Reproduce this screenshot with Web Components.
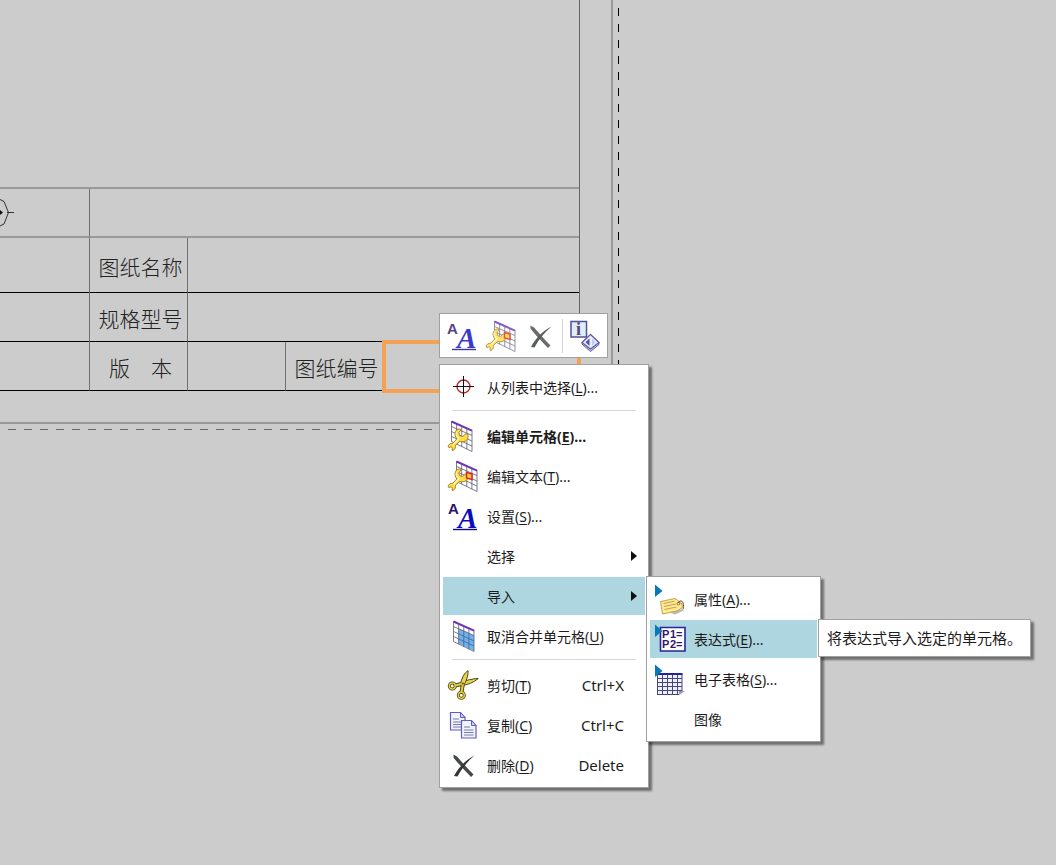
<!DOCTYPE html>
<html lang="zh-CN">
<head>
<meta charset="utf-8">
<title>图纸</title>
<style>
  body { margin: 0; background: #ccc; color: #1c1c1c; font: 14px/20px "Noto Sans", "Noto Sans CJK SC", sans-serif; }
  cad-app { min-height: 100vh; }
</style>
</head>
<body>
<cad-app>
  <drawing-sheet></drawing-sheet>
  <popup-group slot="popup">
    <tool-bar>
      <tool-button icon="settings" label="设置"></tool-button>
      <tool-button icon="edit-text" label="编辑文本"></tool-button>
      <tool-button icon="delete" label="删除"></tool-button>
      <tool-divider></tool-divider>
      <tool-button icon="info" label="信息"></tool-button>
    </tool-bar>
    <context-menu>
      <menu-item icon="target">从列表中选择(<u>L</u>)...</menu-item>
      <menu-divider></menu-divider>
      <menu-item icon="edit-cell" default>编辑单元格(<u>E</u>)...</menu-item>
      <menu-item icon="edit-text">编辑文本(<u>T</u>)...</menu-item>
      <menu-item icon="settings">设置(<u>S</u>)...</menu-item>
      <menu-item more>选择</menu-item>
      <menu-item more active>导入
        <context-menu slot="over">
          <menu-item icon="attributes">属性(<u>A</u>)...</menu-item>
          <menu-item icon="expression" active>表达式(<u>E</u>)...
            <tool-tip slot="over">将表达式导入选定的单元格。</tool-tip>
          </menu-item>
          <menu-item icon="spreadsheet">电子表格(<u>S</u>)...</menu-item>
          <menu-item>图像</menu-item>
        </context-menu>
      </menu-item>
      <menu-item icon="unmerge">取消合并单元格(<u>U</u>)</menu-item>
      <menu-divider></menu-divider>
      <menu-item icon="cut" keys="Ctrl+X">剪切(<u>T</u>)</menu-item>
      <menu-item icon="copy" keys="Ctrl+C">复制(<u>C</u>)</menu-item>
      <menu-item icon="delete" keys="Delete">删除(<u>D</u>)</menu-item>
    </context-menu>
  </popup-group>
</cad-app>

<script>
const define = (name, html, setup) => {
  const template = document.createElement('template');
  template.innerHTML = html;
  customElements.define(name, class extends HTMLElement {
    constructor() {
      super();
      this.attachShadow({ mode: 'open' }).append(template.content.cloneNode(true));
    }
    connectedCallback() { if (setup) setup(this, this.shadowRoot); }
  });
};

/* Slanted grid whose top left corner is at x, 1 */
const grid = (x, w, filled) => {
  const s = w / 4, d = 9 / 4;
  let out = `<path d="M${x} 1l${w} 9v21l${-w} -9.5z" fill="#fff"/>`;
  if (filled) out += `<path d="M${x + s} 8.5L${x + w} 15.500V31L${x + s} 23.500z" fill="#69b4f4"/>`;
  out += `<path d="M${x} 1v20.500l${w} 10V10M${x + s} ${1 + d}v21M${x + 2 * s} ${1 + 2 * d}v21.500M${x + 3 * s} ${1 + 3 * d}v21.500M${x} 6.500l${w} 9M${x} 11.500l${w} 9.500M${x} 16.500l${w} 9.500" fill="none" stroke="#5c5c74" stroke-width=".8"/>`;
  return out + `<path d="M${x} 1.500l${w} 9.200" stroke="#6d35b5" stroke-width="2"/>`;
};
const wrench = `<path d="M8.500 11.500c1-2 3.200-2.700 5-2.500l.5 1-2 2.500.5 3 3 1 3.300-2.800 1.800.3c1.400 3-.1 6.800-3.600 7.600-1.700.4-3.100 0-4.200-.2l-4.300 3.800c.3 2-.5 4.300-2.500 5.300l-1-.3.4-2.400-1.400-1-2 .7-.9-.6c.2-2.300 2.100-4 4.800-3.700l4-4.400c-1.800-1.800-2.400-4.700-1.400-7.300z" fill="#ffdb45" stroke="#9c7a1e" stroke-width=".9"/><path d="M9.500 12.500c-.5 2 .2 4.500 2.300 6.200L6.500 24.500" fill="none" stroke="#fff6b5" stroke-width="1.300"/>`;
const pointer = '<path d="M1 1.500L8.500 8L1 14z" fill="#0a78b4"/>';

const ICONS = {
  target: '<circle cx="16.500" cy="15.500" r="6.500" fill="none" stroke="#c8202c" stroke-width="1.400"/><path d="M6 15.500h21M16.500 5v21" stroke="#111" stroke-width="1"/>',
  'edit-cell': grid(4.5, 20.5) + wrench,
  'edit-text': grid(9.5, 20.5) + wrench + '<path d="M19.500 12.500l5.500 1.500v5.500l-5.500-1.500z" fill="#ffd23c" stroke="#e0261c" stroke-width="1.500"/>',
  settings: '<text x="1" y="14" font-family="Liberation Sans" font-weight="700" font-size="15" fill="#2b1266">A</text><text x="11" y="28" font-family="Liberation Serif" font-weight="700" font-style="italic" font-size="29" fill="#0a0abf">A</text><path d="M6 29.500h24" stroke="#0a0a8c" stroke-width="1.400"/>',
  unmerge: grid(6.5, 20.5, true),
  cut: '<g fill="none" stroke-linecap="round"><g stroke="#54480e"><circle cx="5.300" cy="17" r="3" stroke-width="3"/><circle cx="14.300" cy="26.300" r="3" stroke-width="3"/><path d="M8.500 16.500L16 14.500M14.500 23L16 14.500" stroke-width="4"/></g><path d="M15 16.500C20 16 27 13.500 31.300 9.500C26 9.500 18 11.500 14 13.500z" fill="#e6d254" stroke="#54480e"/><path d="M13.500 15C14.500 9 17 4.500 21 1.500C21.500 6 19.500 12 16.500 17z" fill="#e6d254" stroke="#54480e"/><g stroke="#decb4b"><circle cx="5.300" cy="17" r="3" stroke-width="1.400"/><circle cx="14.300" cy="26.300" r="3" stroke-width="1.400"/><path d="M8.500 16.500L16 14.500M14.500 23L16 14.500" stroke-width="2"/></g></g><circle cx="15.800" cy="14.500" r="1" fill="#54480e"/>',
  copy: ['3.500 3.500', '14.500 11.500'].map(p => `<g transform="translate(${p})"><path d="M0 0h10l4.500 5v12.500H0z" fill="#f1f4ff" stroke="#625cc4" stroke-width="1.200"/><path d="M10 0v5h4.500z" fill="#cfd0fb" stroke="#625cc4"/><path d="M2.500 6.500h6M2.500 9.500h9.500M2.500 12h9.500M2.500 14.500h9.500" stroke="#777ba0" stroke-width="1"/></g>`).join(''),
  delete: '<path d="M6.500 5.500L10 7.500C15 13 21 20 26.500 25.500L24 28C18 21.500 10 13.500 6.500 8.500z" fill="#454848"/><path d="M27.500 6.500C20.500 12.500 14.500 19.500 10.500 27.500L7 27C11.500 18.500 19 10.500 27.500 6.500z" fill="#333636"/>',
  info: '<path d="M2 1.500h15.500v15.500H2z" fill="#dce9fb" stroke="#27277e" stroke-width="1.500"/><text x="7" y="15" font-family="Liberation Serif" font-weight="700" font-size="18" fill="#20205c">i</text><path d="M21.500 14.500l8.500 8v2l-8.500 7-8.500-7.500v-1.500z" fill="#adb3d8" stroke="#34348a"/><path d="M21.500 14.500l8.500 8-8.500 6.500-8.500-6.500z" fill="#e6ecff" stroke="#34348a" stroke-width="1.200"/><path d="M20.500 18.500v7.500l-4-3.700z" fill="#25259a"/><path d="M23 18.500v7.500l3.500-3.700z" fill="#b8bde8"/>',
  attributes: '<path d="M15 29l14-3 1 1.500-9 4z" fill="#b9b9b9"/>' + pointer + '<path d="M6.500 18.500L21 15.500l6.500 4.500 1 4.500-5.500 3.500-14.500 3z" fill="#ffe98a" stroke="#b79b4c" stroke-width=".9"/><path d="M9.500 20.500l11-2.300M10 23.500l12-2.500M10.500 26.500l12-2.500" stroke="#c09f62"/><circle cx="24.500" cy="20.500" r="1.300" fill="#fff" stroke="#8a551e"/><path d="M24.500 20c1-3 4-2.500 4.500 0s1 4.500 0 6" fill="none" stroke="#713d26"/>',
  expression: '<path d="M6.500 4.500h24.500v23.500H6.500z" fill="#fff" stroke="#262698" stroke-width="1.600"/><g font-family="Liberation Sans" font-weight="700" font-size="11" fill="#31186e"><text x="8 16 22" y="15">P1=</text><text x="8 16 22" y="25">P2=</text></g>' + pointer,
  spreadsheet: '<path d="M3.500 11.500h24.500v20H3.500z" fill="#eef0ff"/><path d="M3.500 11v20.500M8.500 11v20.500M13.500 11v20.500M18.500 11v20.500M23.500 11v20.500M28 11v17M3 15.500h25M3 19.500h25M3 23.500h25M3 27.500h25M3 31.500h22" fill="none" stroke="#46467f"/><path d="M3 11h25.500" stroke="#2222a0" stroke-width="2"/><path d="M25 32v-4h6z" fill="#9a9aad"/>' + pointer,
};
const icon = name => `<svg width="32" height="32" viewBox="0 0 32 32" aria-hidden="true">${ICONS[name] || ''}</svg>`;

define('cad-app', `
  <style>
    :host { display: block; position: relative; overflow: hidden; }
    ::slotted([slot="popup"]) { position: absolute; left: 439px; top: 313px; }
  </style>
  <slot></slot><slot name="popup"></slot>`);

define('drawing-sheet', `
  <style>
    :host { display: block; }
    .trim { width: fit-content; padding: 0 6px 6px 0;
      background: repeating-linear-gradient(transparent 0 8px, #000 8px 16px) right / 1px 100% no-repeat,
        repeating-linear-gradient(90deg, transparent 0 8px, #666 8px 16px) bottom / 100% 1px no-repeat; }
    .frame { padding: 0 31px 31px 0; border: solid #999; border-width: 0 2px 2px 0; }
    .area { padding-top: 187px; border-right: 1px solid #666; }
    table { border-collapse: separate; border-spacing: 0; table-layout: fixed; width: 579px; border-top: 2px solid #999; }
    th, td { box-sizing: border-box; padding: 0; border-right: 1px solid #707070; border-bottom: 1px solid #000; }
    tr > :last-child { border-right: 0; }
    tr { height: 49px; }
    .top td { border-bottom: 2px solid #999; }
    .name { height: 55px; }
    th { padding: 2px 0 0 4px; font: 300 21px/30px "Noto Sans CJK SC", sans-serif; white-space: nowrap; color: #222; }
    td.selected { outline: 4px solid #f3a154; outline-offset: -2px; }
    svg { display: block; }
  </style>
  <div class="trim"><div class="frame"><div class="area">
    <table>
      <colgroup><col style="width:90px"><col style="width:98px"><col style="width:98px"><col style="width:98px"><col></colgroup>
      <tr class="top"><td><svg width="16" height="32" viewBox="0 0 16 32" fill="none" stroke="#333"><path d="M0 2.500L4 4.500L8.500 15.500L4 27L0 29M7 15.500h7"/><path d="M0 13l3 2.500-3 2.500z" fill="#111" stroke="none"/></svg></td><td colspan="4"></td></tr>
      <tr class="name"><td></td><th scope="row">图纸名称</th><td colspan="3"></td></tr>
      <tr><td></td><th scope="row">规格型号</th><td colspan="3"></td></tr>
      <tr><td></td><th scope="row">版　本</th><td></td><th scope="row">图纸编号</th><td class="selected"></td></tr>
    </table>
  </div></div></div>`);

define('popup-group', `
  <style>:host { display: flex; flex-direction: column; align-items: flex-start; gap: 6px; }</style>
  <slot></slot>`);

define('tool-bar', `
  <style>:host { display: flex; align-items: center; gap: 3px; padding: 3px 4px; background: #fff; border: 1px solid #a0a0a0; }</style>
  <slot></slot>`, host => host.setAttribute('role', 'toolbar'));

define('tool-button', `
  <style>
    :host { display: block; }
    button { display: grid; place-items: center; width: 36px; height: 37px; padding: 0; border: 0; background: none; opacity: .8; }
    svg { overflow: visible; }
  </style>
  <button type="button"></button>`, (host, root) => {
    const button = root.querySelector('button');
    button.setAttribute('aria-label', host.getAttribute('label'));
    button.innerHTML = icon(host.getAttribute('icon'));
  });

define('tool-divider', `<style>:host { display: block; width: 1px; height: 34px; margin: 0 1px; background: #d4d4d4; }</style>`);

define('context-menu', `
  <style>
    :host { display: flex; flex-direction: column; gap: 2px; box-sizing: border-box; width: 210px; padding: 3px;
      background: #fff; border: 1px solid #a0a0a0; box-shadow: 3px 3px 2px rgba(0, 0, 0, .45); }
    :host([slot="over"]) { width: 175px; }
  </style>
  <slot></slot>`, host => host.setAttribute('role', 'menu'));

define('menu-divider', `<style>:host { display: block; height: 1px; margin: 2px 9px 4px; background: #d6d6d6; }</style>`);

define('menu-item', `
  <style>
    :host { display: block; position: relative; font-weight: 400; }
    button { display: flex; align-items: center; width: 100%; height: 38px; padding: 0 8px 0 4px; border: 0;
      background: none; color: inherit; font: inherit; text-align: left; white-space: nowrap; }
    :host([default]) button { font-weight: 700; }
    :host([active]) button { background: #aed6e0; }
    svg { flex: none; overflow: visible; }
    .label { flex: 1; margin-left: 8px; padding-top: 2px; }
    kbd { padding-right: 13px; font: inherit; font-size: 15px; }
    .more { width: 0; height: 0; border: solid transparent; border-width: 5px 0 5px 6px; border-left-color: #111; }
    ::slotted(u) { text-underline-offset: 2px; }
    ::slotted([slot="over"]) { position: absolute; z-index: 1; left: calc(100% + 1px); top: -1px; }
  </style>
  <button type="button" role="menuitem"><span class="label"><slot></slot></span></button><slot name="over"></slot>`, (host, root) => {
    const button = root.querySelector('button');
    button.insertAdjacentHTML('afterbegin', icon(host.getAttribute('icon')));
    if (host.hasAttribute('keys')) {
      const keys = document.createElement('kbd');
      keys.textContent = host.getAttribute('keys');
      button.append(keys);
    }
    if (host.hasAttribute('more')) {
      button.setAttribute('aria-haspopup', 'menu');
      button.insertAdjacentHTML('beforeend', '<span class="more"></span>');
    }
  });

define('tool-tip', `
  <style>
    :host { display: block; padding: 8px; font-size: 15px; white-space: nowrap; background: #fff;
      border: 1px solid #a0a0a0; box-shadow: 3px 3px 2px rgba(0, 0, 0, .45); }
  </style>
  <slot></slot>`, host => host.setAttribute('role', 'tooltip'));
</script>
</body>
</html>
